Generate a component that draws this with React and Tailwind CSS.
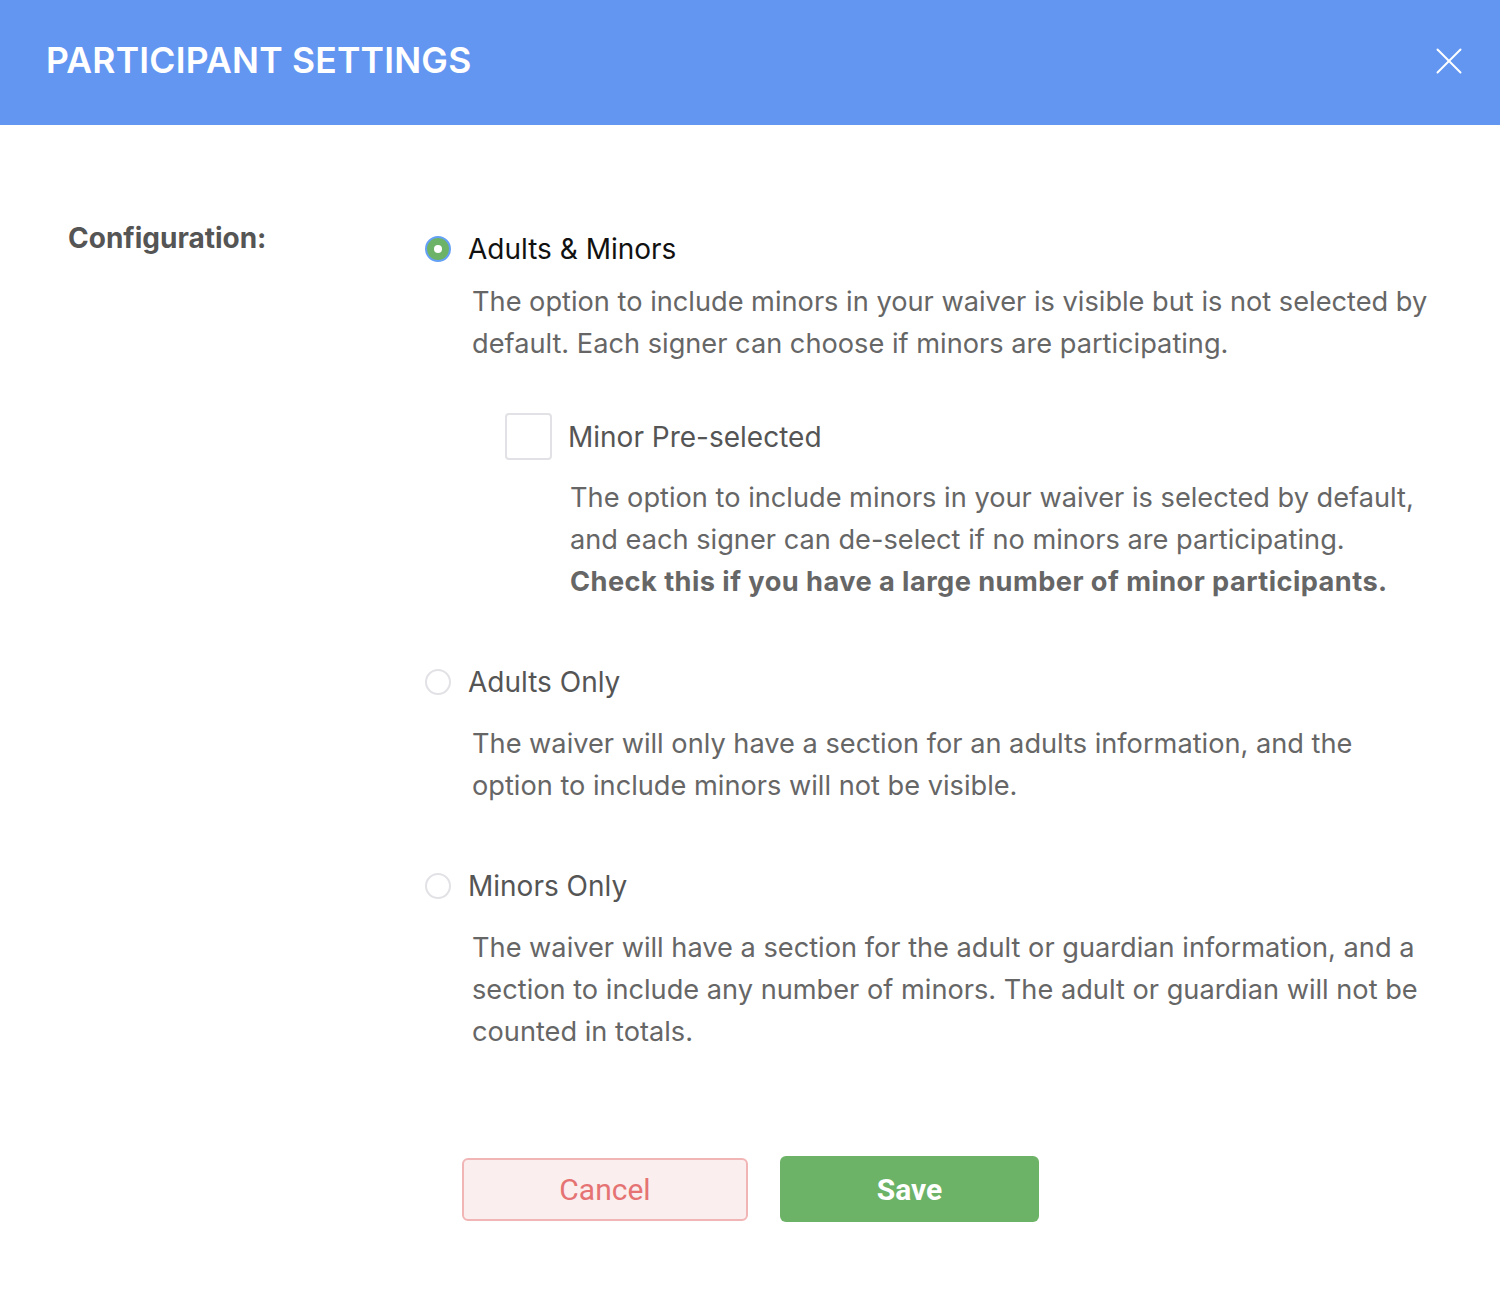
import React, { useState } from "react";
import { X } from "lucide-react";

const Radio = ({ checked }) => (
  <span
    className={
      checked
        ? "flex h-[26px] w-[26px] shrink-0 items-center justify-center rounded-full border-2 border-[#64a0f5] bg-[#6db367]"
        : "h-[26px] w-[26px] shrink-0 rounded-full border-2 border-[#e2e2e6] bg-white"
    }
  >
    {checked && <span className="h-[8px] w-[8px] rounded-full bg-white" />}
  </span>
);

const Option = ({ label, checked, onClick, children, labelClass }) => (
  <div>
    <button onClick={onClick} className="flex items-center gap-[17px] cursor-pointer">
      <Radio checked={checked} />
      <span className={`text-[28px] leading-[42px] ${labelClass}`}>{label}</span>
    </button>
    <div className="pl-[47px]">{children}</div>
  </div>
);

const App = () => {
  const [config, setConfig] = useState("both");
  const [preselect, setPreselect] = useState(false);

  return (
    <div className="min-h-[1312px] bg-white font-['Inter',sans-serif] text-[#666666]">
      {/* header */}
      <div className="flex h-[125px] items-center justify-between bg-[#6396f1] pb-[3px] pl-[46px] pr-[28px]">
        <h1 className="text-[35.5px] font-semibold tracking-[0.2px] text-white">PARTICIPANT SETTINGS</h1>
        <X size={46} strokeWidth={1} className="text-white" />
      </div>

      <div className="flex items-start pt-[92px]">
        <div className="w-[425px] shrink-0 pl-[68px]">
          <div className="text-[28px] leading-[42px] font-bold text-[#555555]">Configuration:</div>
        </div>

        <div className="mt-[11px] flex flex-col pr-[64px]">
          <Option
            label="Adults & Minors"
            checked={config === "both"}
            onClick={() => setConfig("both")}
            labelClass="text-[#111111]"
          >
            <p className="mt-[11px] text-[27.2px] leading-[42px]">
              The option to include minors in your waiver is visible but is not selected by default. Each signer can
              choose if minors are participating.
            </p>
            <div className="mt-[48px] pl-[33px]">
              <button onClick={() => setPreselect(!preselect)} className="flex items-center gap-[16px] cursor-pointer">
                <span className="h-[47px] w-[47px] shrink-0 rounded-[4px] border-2 border-[#e2e2e6] bg-white" />
                <span className="text-[28px] text-[#555555]">Minor Pre-selected</span>
              </button>
              <p className="mt-[17px] pl-[65px] text-[27.2px] leading-[42px]">
                The option to include minors in your waiver is selected by default,
                <br />
                and each signer can de-select if no minors are participating.
                <br />
                <span className="font-bold tracking-[0.45px]">
                  Check this if you have a large number of minor participants.
                </span>
              </p>
            </div>
          </Option>

          <div className="mt-[58px]">
            <Option
              label="Adults Only"
              checked={config === "adults"}
              onClick={() => setConfig("adults")}
              labelClass="text-[#555555]"
            >
              <p className="mt-[20px] text-[27.2px] leading-[42px]">
                The waiver will only have a section for an adults information, and the
                <br />
                option to include minors will not be visible.
              </p>
            </Option>
          </div>

          <div className="mt-[58px]">
            <Option
              label="Minors Only"
              checked={config === "minors"}
              onClick={() => setConfig("minors")}
              labelClass="text-[#555555]"
            >
              <p className="mt-[20px] text-[27.2px] leading-[42px]">
                The waiver will have a section for the adult or guardian information, and a section to include any number
                of minors. The adult or guardian will not be counted in totals.
              </p>
            </Option>
          </div>
        </div>
      </div>

      <div className="mt-[103px] flex items-center gap-[32px] pl-[462px] font-['Roboto',sans-serif]">
        <button className="h-[63px] w-[286px] rounded-[6px] border-2 border-[#f2b5b5] bg-[#fbeeee] text-[30px] text-[#e57373]">
          Cancel
        </button>
        <button className="h-[66px] w-[259px] rounded-[6px] bg-[#6db367] text-[30px] font-bold text-white">Save</button>
      </div>
    </div>
  );
};

export default App;
